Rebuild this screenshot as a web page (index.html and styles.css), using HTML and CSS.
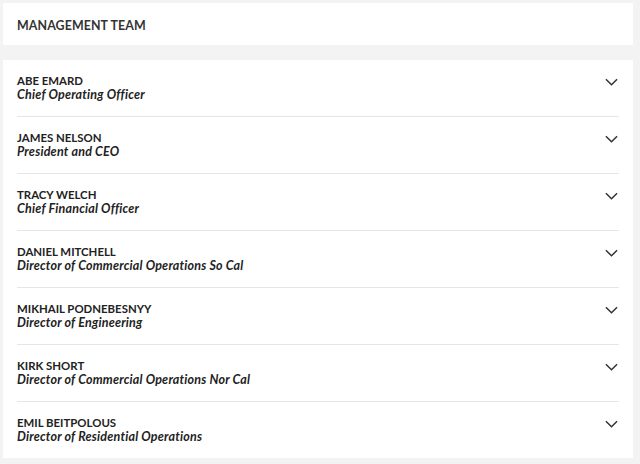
FILE: index.html
```html
<!DOCTYPE html>
<html>
<head>
<meta charset="utf-8">
<link rel="stylesheet" href="styles.css">
</head>
<body>
<div class="page">
  <div class="card header"><h2>MANAGEMENT TEAM</h2></div>
  <div class="card list">
    <div class="row"><div class="info"><div class="name">ABE EMARD</div><div class="title">Chief Operating Officer</div></div><svg class="chev" viewBox="0 0 14 8"><path d="M1 1l6 6 6-6"/></svg></div>
    <div class="row"><div class="info"><div class="name">JAMES NELSON</div><div class="title">President and CEO</div></div><svg class="chev" viewBox="0 0 14 8"><path d="M1 1l6 6 6-6"/></svg></div>
    <div class="row"><div class="info"><div class="name">TRACY WELCH</div><div class="title">Chief Financial Officer</div></div><svg class="chev" viewBox="0 0 14 8"><path d="M1 1l6 6 6-6"/></svg></div>
    <div class="row"><div class="info"><div class="name">DANIEL MITCHELL</div><div class="title">Director of Commercial Operations So Cal</div></div><svg class="chev" viewBox="0 0 14 8"><path d="M1 1l6 6 6-6"/></svg></div>
    <div class="row"><div class="info"><div class="name">MIKHAIL PODNEBESNYY</div><div class="title">Director of Engineering</div></div><svg class="chev" viewBox="0 0 14 8"><path d="M1 1l6 6 6-6"/></svg></div>
    <div class="row"><div class="info"><div class="name">KIRK SHORT</div><div class="title">Director of Commercial Operations Nor Cal</div></div><svg class="chev" viewBox="0 0 14 8"><path d="M1 1l6 6 6-6"/></svg></div>
    <div class="row"><div class="info"><div class="name">EMIL BEITPOLOUS</div><div class="title">Director of Residential Operations</div></div><svg class="chev" viewBox="0 0 14 8"><path d="M1 1l6 6 6-6"/></svg></div>
  </div>
</div>
</body>
</html>
```
FILE: styles.css
```css
html, body { margin: 0; padding: 0; background: #f3f3f3; }
body { font-family: Lato, "Noto Sans", sans-serif; color: #222; }
.page { padding: 3px 7px 0 3px; display: flex; flex-direction: column; gap: 15px; }
.card { background: #fff; }
.header { height: 42px; display: flex; align-items: center; padding: 0 14px; }
.header h2 { margin: 2px 0 0; font-size: 12.4px; font-weight: 700; letter-spacing: 0.1px; color: #333; }
.list { padding: 0 14px; }
.row { height: 56px; display: flex; align-items: center; justify-content: space-between; border-top: 1px solid #e6e6e6; }
.row:first-child { border-top: none; }
.info { display: flex; flex-direction: column; margin-top: 0; }
.name { font-size: 11.4px; font-weight: 700; line-height: 14px; color: #222; }
.title { font-size: 12.5px; font-weight: 700; font-style: italic; line-height: 14px; letter-spacing: 0.2px; color: #222; }
.chev { width: 13px; height: 8px; fill: none; stroke: #333; stroke-width: 1.6; margin-right: 1px; align-self: flex-start; margin-top: 18px; }
```
